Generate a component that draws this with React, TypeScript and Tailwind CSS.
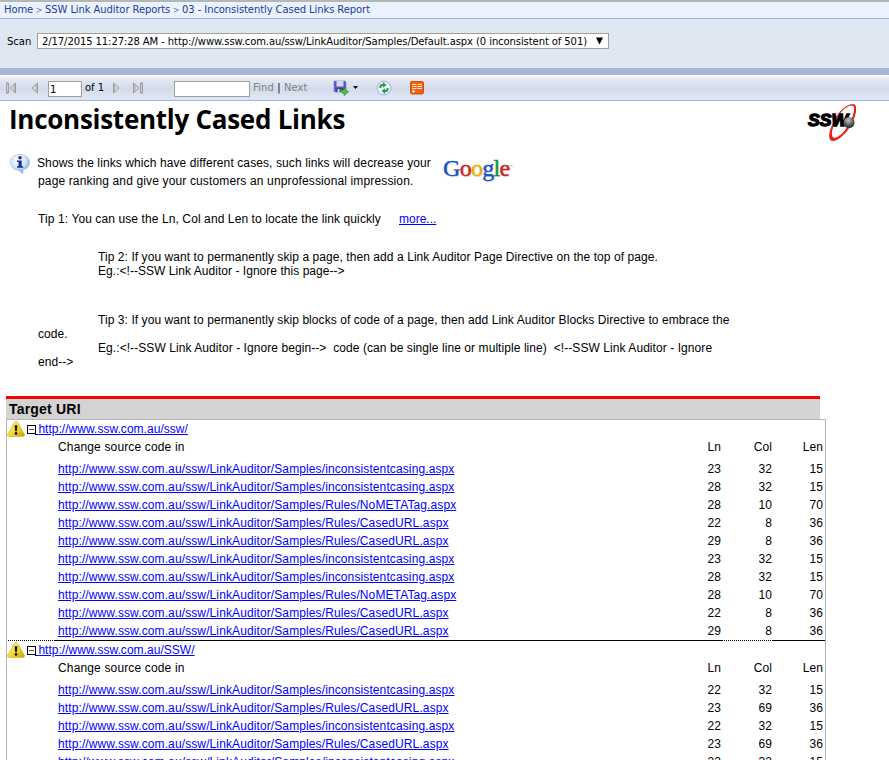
import React from "react";

type Row = [string, number, number, number];

const BASE = "http://www.ssw.com.au/ssw/LinkAuditor/Samples/";
const CASING = "inconsistentcasing.aspx";
const META = "Rules/NoMETATag.aspx";
const CASED = "Rules/CasedURL.aspx";

const groups: { uri: string; rows: Row[] }[] = [
  {
    uri: "http://www.ssw.com.au/ssw/",
    rows: [
      [CASING, 23, 32, 15],
      [CASING, 28, 32, 15],
      [META, 28, 10, 70],
      [CASED, 22, 8, 36],
      [CASED, 29, 8, 36],
      [CASING, 23, 32, 15],
      [CASING, 28, 32, 15],
      [META, 28, 10, 70],
      [CASED, 22, 8, 36],
      [CASED, 29, 8, 36],
    ],
  },
  {
    uri: "http://www.ssw.com.au/SSW/",
    rows: [
      [CASING, 22, 32, 15],
      [CASED, 23, 69, 36],
      [CASING, 22, 32, 15],
      [CASED, 23, 69, 36],
      [CASING, 22, 32, 15],
    ],
  },
];

function Arrow({ flip = false, bar = false }: { flip?: boolean; bar?: boolean }) {
  return (
    <svg width="12" height="12" viewBox="0 0 12 12" className={flip ? "shrink-0 -scale-x-100" : "shrink-0"}>
      <defs>
        <linearGradient id="arrowFill" x1="0" x2="1">
          <stop offset="0" stopColor="#a4a4a4" />
          <stop offset=".6" stopColor="#e4e4e4" />
          <stop offset="1" stopColor="#aaa" />
        </linearGradient>
      </defs>
      <path d="M1.500 1 L6.800 6 L1.500 11 Z" fill="url(#arrowFill)" stroke="#9c9c9c" />
      {bar && <rect x="8.500" y="1" width="2" height="10" fill="#ccc" stroke="#a0a0a0" />}
    </svg>
  );
}

function SaveIcon() {
  return (
    <svg width="16" height="16" viewBox="0 0 16 16" className="shrink-0">
      <path d="M1 1 H12 L13 2 V12 H2 L1 11 Z" fill="#5458c0" stroke="#7c80cc" strokeWidth=".6" />
      <rect x="3.5" y="1" width="7" height="5.5" fill="#d4d8f6" />
      <rect x="3.5" y="8.5" width="6.5" height="3.5" fill="#202060" />
      <rect x="4.5" y="9" width="2" height="3" fill="#dfe0f4" />
      <path d="M7 8.6 C8 10 9.500 10.400 11 10.200 V8 L15.800 11.800 L11 15.700 V13.600 C8.500 13.600 7 12 7 8.600Z" fill="#4fb848" stroke="#2f8c34" strokeWidth=".5" />
    </svg>
  );
}

function RefreshIcon() {
  return (
    <svg width="16" height="16" viewBox="0 0 16 16" className="shrink-0">
      <circle cx="8" cy="8" r="6.800" fill="#eef6ff" stroke="#8db4e2" />
      <path d="M3.300 8 C3 5 5 3.600 7 3.800 V2 L10.500 5 L7 7.800 V6 C6 5.900 5.400 6.500 5.300 8Z" fill="#2f9e3a" />
      <path d="M12.700 8 C13 11 11 12.400 9 12.200 V14 L5.500 11 L9 8.200 V10 C10 10.100 10.600 9.500 10.700 8Z" fill="#2f9e3a" />
    </svg>
  );
}

function FeedIcon() {
  return (
    <svg width="14" height="14" viewBox="0 0 14 14" className="shrink-0">
      <rect x=".5" y=".5" width="13" height="12.500" rx="1.500" fill="#ea6412" stroke="#d4500c" />
      <g fill="#ffe3cc">
        <rect x="2" y="3" width="4.500" height="1" />
        <rect x="2" y="5" width="4.500" height="1" />
        <rect x="7.500" y="3" width="4.500" height="1" />
        <rect x="7.500" y="5" width="4.500" height="1" />
        <rect x="7.500" y="7" width="4.500" height="1" />
        <rect x="2" y="7" width="4.500" height="1" />
        <circle cx="3.500" cy="10.300" r="1.200" />
      </g>
    </svg>
  );
}

function InfoIcon() {
  return (
    <svg width="20" height="20" viewBox="0 0 20 20" className="shrink-0">
      <defs>
        <radialGradient id="info" cx=".4" cy=".3" r=".75">
          <stop offset="0" stopColor="#fff" />
          <stop offset=".55" stopColor="#d3e4f8" />
          <stop offset="1" stopColor="#5f8fd0" />
        </radialGradient>
      </defs>
      <path d="M10 .4 C15.500 .4 19.600 4 19.600 8.200 C19.600 12 16.500 15.200 13 15.900 L12.700 19.600 L8.500 16.200 C3.800 15.800 .4 12.400 .4 8.200 C.4 4 4.500 .4 10 .4Z" fill="url(#info)" stroke="#a4bce0" strokeWidth=".7" />
      <circle cx="10" cy="3.800" r="1.800" fill="#14309c" />
      <path d="M7 6.600 H11.700 V12.300 H13.200 V13.800 H7 V12.300 H8.500 V8.100 H7Z" fill="#14309c" />
    </svg>
  );
}

function WarningIcon() {
  return (
    <svg width="18" height="16" viewBox="0 0 18 16" className="shrink-0">
      <defs>
        <linearGradient id="warn" x1="0" x2="1" y1="0" y2="1">
          <stop offset="0" stopColor="#fff9a0" />
          <stop offset=".5" stopColor="#f2dc34" />
          <stop offset="1" stopColor="#c8a000" />
        </linearGradient>
      </defs>
      <path d="M9 .3 Q10.200 .3 10.800 1.600 L17.400 13.300 Q18 15.200 16.300 15.600 H1.700 Q0 15.200 .6 13.300 L7.200 1.600 Q7.800 .3 9 .3Z" fill="url(#warn)" stroke="#cfae20" strokeWidth=".6" />
      <path d="M7.600 4.200 H10.400 L9.800 10.200 H8.200Z" fill="#111" />
      <circle cx="9" cy="12.400" r="1.300" fill="#111" />
    </svg>
  );
}

function SswLogo() {
  return (
    <svg width="52" height="40" viewBox="0 0 52 40" className="shrink-0">
      <defs>
        <radialGradient id="ball" cx=".45" cy=".3" r=".7">
          <stop offset="0" stopColor="#c4c4c4" />
          <stop offset="1" stopColor="#222" />
        </radialGradient>
      </defs>
      <path fillRule="evenodd" fill="#e8201c" d="M46 1 C51 1 50 12 44 22 C38 33 28 40 24 37.500 C20 35 23 24 29 14 C34 6 41 1 46 1Z M45 2.500 C40 2.500 34 8 29.500 16 C25 25 23.500 33 26.500 34.500 C30 36 37 30 42 21 C47 12 49 3 45 2.500Z" />
      <text x="1" y="23" fontSize="16" fontWeight="700" fontStyle="italic" textLength="40" lengthAdjust="spacingAndGlyphs" fill="#000" stroke="#000" strokeWidth="1.300" fontFamily="'Liberation Sans', sans-serif">SSW</text>
      <circle cx="42" cy="19.500" r="5.500" fill="url(#ball)" />
    </svg>
  );
}

function GoogleLogo() {
  return (
    <div className="ml-[12px] mt-[-3px] h-[30px] w-[75px] whitespace-nowrap font-['Liberation_Serif',serif] text-[24px] leading-[30px] tracking-[-0.7px] [-webkit-text-stroke:0.4px_currentColor] [text-shadow:1px_1px_1px_#ddd]">
      <span className="text-[#1a4fc4]">G</span>
      <span className="text-[#d02020]">o</span>
      <span className="text-[#e0b000]">o</span>
      <span className="text-[#1a4fc4]">g</span>
      <span className="text-[#12963a]">l</span>
      <span className="text-[#d02020]">e</span>
      <span className="align-[9px] text-[3px] text-[#777] [-webkit-text-stroke:0]">™</span>
    </div>
  );
}

function Expander() {
  return (
    <span className="ml-[2px] flex h-[9px] w-[9px] shrink-0 items-center justify-center border border-black">
      <span className="h-px w-[5px] bg-[#555]" />
    </span>
  );
}

function Separator() {
  return <span className="mx-[-0.5px] text-[8px] text-[#777]">&gt;</span>;
}

const dots = "bg-[repeating-linear-gradient(90deg,#000_0_1px,#fff_1px_2px)]";

export default function App() {
  return (
    <div className="h-[760px] w-[889px] overflow-hidden bg-white font-['Liberation_Sans',sans-serif] text-[12px] text-black">
      <nav className="h-[19px] whitespace-nowrap border-b border-t-2 border-b-[#9fb8df] border-t-[#b4b8b4] bg-[#eaf2ff] pl-[4px] font-['DejaVu_Sans',sans-serif] text-[10px] leading-[16px] tracking-[-0.09px] text-[#1e3c96]">
        Home <Separator /> SSW Link Auditor Reports <Separator /> 03 - Inconsistently Cased Links Report
      </nav>
      <div className="flex h-[49px] items-start bg-[#dfe7f3] pl-[7px] pt-[14px] font-['DejaVu_Sans',sans-serif] text-[10px]">
        <span className="w-[30px] leading-[17px]">Scan</span>
        <div className="flex h-[16px] w-[572px] items-center justify-between whitespace-nowrap border border-[#a0a0a0] bg-white pl-[4px] pr-[5px]">
          <span className="tracking-[-0.09px]">2/17/2015 11:27:28 AM - http://www.ssw.com.au/ssw/LinkAuditor/Samples/Default.aspx (0 inconsistent of 501)</span>
          <svg width="7" height="8" className="shrink-0"><path d="M0 0.500H7L3.500 7.500Z" /></svg>
        </div>
      </div>
      <div className="h-[7px] bg-[#a4b6da]" />
      <div className="flex h-[26px] items-center whitespace-nowrap border-b border-t-2 border-b-[#9fb8df] border-t-[#fcfaee] bg-linear-to-b from-[#e9ecf6] via-[#d4daea] to-[#e0e8f8] pb-[2px] pl-[5px] font-['DejaVu_Sans',sans-serif] text-[10px]">
        <Arrow flip bar />
        <span className="ml-[10px] flex"><Arrow flip /></span>
        <span className="mb-[-2px] ml-[9px] h-[16px] w-[34px] border border-[#a0a0a0] bg-white pl-[1px] leading-[15px]">1</span>
        <span className="ml-[3px] w-[26px]">of 1</span>
        <span className="ml-px flex"><Arrow /></span>
        <span className="ml-[8px] flex"><Arrow bar /></span>
        <span className="mb-[-2px] ml-[30px] h-[16px] w-[76px] border border-[#a0a0a0] bg-white" />
        <span className="ml-[3px] w-[55px] tracking-[0.1px] text-[#808080]">Find <span className="text-black">|</span> Next</span>
        <span className="ml-[25px] flex"><SaveIcon /></span>
        <svg width="5" height="3" className="ml-[4px]"><path d="M0 0H5L2.500 3Z" /></svg>
        <span className="ml-[18px] flex"><RefreshIcon /></span>
        <span className="ml-[18px] flex"><FeedIcon /></span>
      </div>

      <header className="flex h-[52px] justify-between pl-[9px] pr-[30px]">
        <h1 className="font-['Open_Sans',sans-serif] text-[26px] font-bold leading-[37px] tracking-[-0.27px]">Inconsistently Cased Links</h1>
        <span className="mt-[2px]"><SswLogo /></span>
      </header>
      <section className="flex h-[57px] whitespace-nowrap pl-[10px] pt-px">
        <span className="w-[27px]"><InfoIcon /></span>
        <p className="w-[394px] leading-[18px] tracking-[0.1px]">
          Shows the links which have different cases, such links will decrease your<br />
          <span className="ml-px tracking-[0.14px]">page ranking and give your customers an unprofessional impression.</span>
        </p>
        <GoogleLogo />
      </section>
      <section className="h-[186px] whitespace-nowrap pl-[38px] leading-[14px] tracking-[0.07px]">
        <p className="flex h-[40px] pt-[2px]">
          <span className="w-[361px] tracking-[0.1px]">Tip 1: You can use the Ln, Col and Len to locate the link quickly</span>
          <a className="tracking-[0] text-[#0000ff] underline">more...</a>
        </p>
        <p className="h-[63px] pl-[60px]">
          Tip 2: If you want to permanently skip a page, then add a Link Auditor Page Directive on the top of page.<br />
          <span className="tracking-[0.04px]">Eg.:&lt;!--SSW Link Auditor - Ignore this page--&gt;</span>
        </p>
        <p className="indent-[60px]">
          Tip 3: If you want to permanently skip blocks of code of a page, then add Link Auditor Blocks Directive to embrace the<br />
          <span className="block indent-0">code.</span>
        </p>
        <p className="indent-[60px]">
          Eg.:&lt;!--SSW Link Auditor - Ignore begin--&gt;&nbsp; code (can be single line or multiple line)&nbsp; &lt;!--SSW Link Auditor - Ignore<br />
          <span className="block indent-0">end--&gt;</span>
        </p>
      </section>
      <div className="ml-[6px] h-[23px] w-[814px] border-t-3 border-[#ff0000] bg-[#d3d3d3] pl-[3px] text-[14px] font-bold leading-[21px] tracking-[0.2px]">Target URI</div>
      <main className="ml-[6px] w-[820px] border border-b-0 border-[#b8b8b8] tracking-[0.11px]">
        {groups.map((g, i) => (
          <section key={g.uri}>
            {i > 0 && (
              <div className="flex h-px pl-px">
                <span className={`w-[46px] ${dots}`} />
                <span className="w-[668px] bg-black" />
                <span className={`w-[50px] ${dots}`} />
                <span className="flex-1 bg-black" />
              </div>
            )}
            <div className="flex h-[18px] items-center">
              <WarningIcon />
              <Expander />
              <a className="ml-[-1px] whitespace-pre tracking-[0.03px] text-[#0000ff] underline"> {g.uri}</a>
            </div>
            <div className="flex h-[22px] pl-[51px] pr-[2px] leading-[19px]">
              <span className="flex-1 tracking-[0.15px]">Change source code in</span>
              <span className="w-[50px] text-right">Ln</span>
              <span className="w-[51px] text-right">Col</span>
              <span className="w-[51px] text-right">Len</span>
            </div>
            {g.rows.map(([path, ln, col, len], j) => (
              <div key={j} className="flex h-[18px] pl-[51px] pr-[2px] leading-[18px]">
                <a className="flex-1 text-[#0000ff] underline">{BASE + path}</a>
                <span className="w-[50px] text-right">{ln}</span>
                <span className="w-[51px] text-right">{col}</span>
                <span className="w-[51px] text-right">{len}</span>
              </div>
            ))}
          </section>
        ))}
      </main>
    </div>
  );
}
